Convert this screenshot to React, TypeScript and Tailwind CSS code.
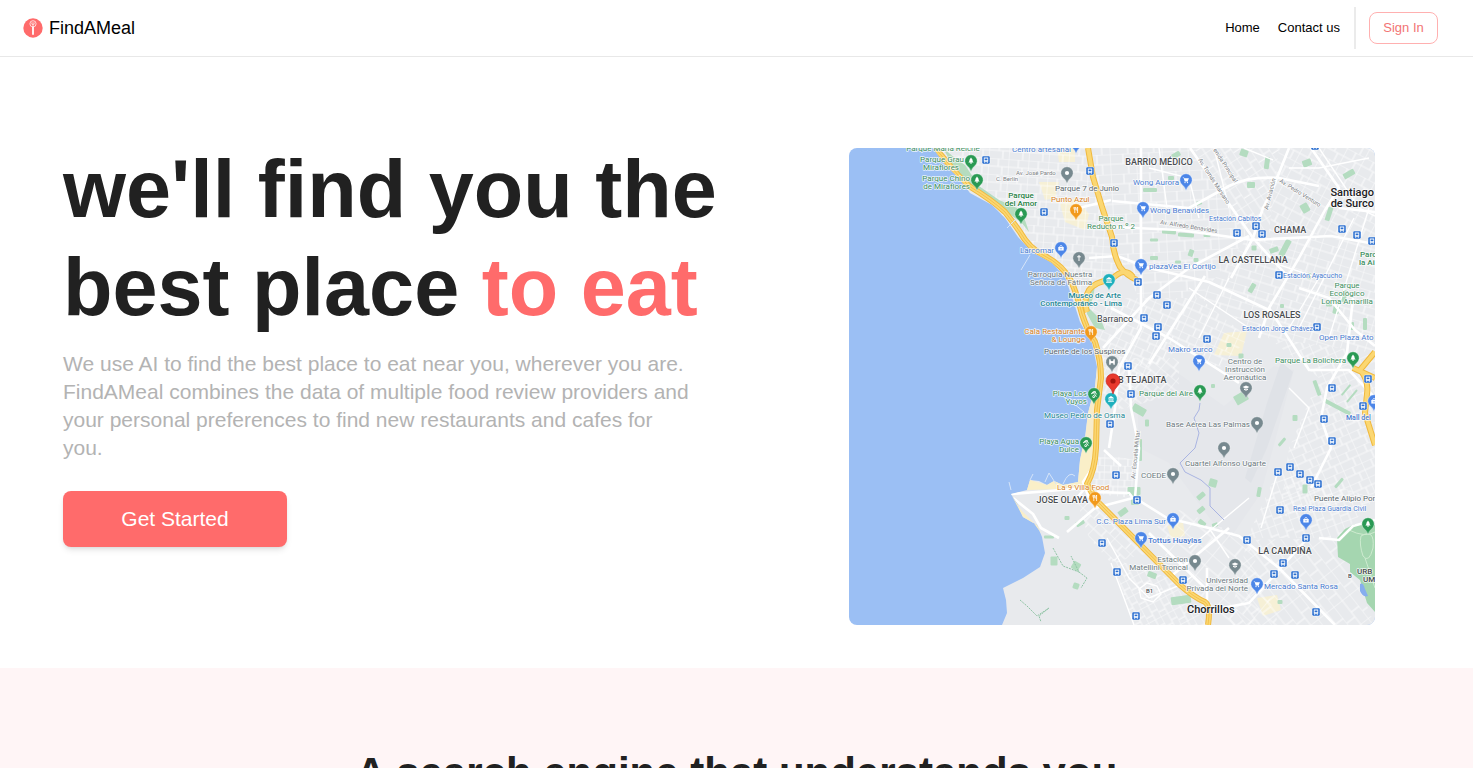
import type { ReactNode } from "react"

type Kind = "tree" | "food" | "cart" | "bag" | "dot" | "cross" | "museum" | "bridge" | "cap" | "beach"

const GREEN = "#2a9a54"
const BLUE = "#4c86e8"
const GREY = "#77898f"
const ORANGE = "#f29a1c"
const TEAL = "#1fb0bd"

const pins: [number, number, string, Kind][] = [
  [122, 13, GREEN, "tree"],
  [128, 32, GREEN, "tree"],
  [172, 66, GREEN, "tree"],
  [218, 25, GREY, "dot"],
  [227, 62, ORANGE, "food"],
  [227, -5, BLUE, "bag"],
  [212, 100, BLUE, "bag"],
  [230, 110, GREY, "cross"],
  [260, 132, TEAL, "museum"],
  [337, 32, BLUE, "cart"],
  [294, 60, BLUE, "cart"],
  [292, 117, BLUE, "cart"],
  [242, 184, ORANGE, "food"],
  [263, 214, GREY, "bridge"],
  [262, 251, TEAL, "museum"],
  [245, 246, GREEN, "beach"],
  [237, 295, GREEN, "beach"],
  [350, 213, BLUE, "cart"],
  [351, 243, GREEN, "tree"],
  [397, 240, GREY, "cap"],
  [504, 210, GREEN, "tree"],
  [408, 275, GREY, "dot"],
  [375, 300, GREY, "dot"],
  [525, 253, BLUE, "bag"],
  [324, 326, GREY, "dot"],
  [246, 350, ORANGE, "food"],
  [324, 371, BLUE, "bag"],
  [292, 390, BLUE, "cart"],
  [346, 413, GREY, "dot"],
  [386, 417, GREY, "cap"],
  [408, 436, BLUE, "cart"],
  [457, 372, BLUE, "bag"],
  [519, 376, GREEN, "tree"],
]

const stations: [number, number][] = [
  [137, 12], [195, 64], [241, 23], [265, 95], [388, 85], [407, 78], [413, 86],
  [493, 81], [508, 87], [523, 93], [430, 127], [289, 134], [308, 147], [466, -2],
  [318, 157], [295, 170], [309, 179], [307, 188], [279, 218], [282, 246], [261, 276],
  [358, 191], [468, 179], [519, 231], [483, 240], [514, 258], [475, 271], [483, 293],
  [267, 327], [288, 352], [253, 395], [268, 424], [287, 468], [429, 324], [441, 319],
  [451, 326], [461, 332], [469, 336], [431, 362], [457, 390], [398, 392], [434, 415],
  [425, 426], [446, 427], [334, 432], [467, 464],
]

type Label = {
  t: string
  x: number
  y: number
  c: string
  s?: number
  w?: number
  a?: "start" | "middle" | "end"
  r?: number
}

const park = "#3d8f5f"
const shop = "#4a7bd0"
const place = "#6d7a80"
const area = "#4a4d50"
const road = "#7b8084"
const food = "#d98324"
const museum = "#1c8794"

const labels: Label[] = [
  { t: "Parque Maria Reiche", x: 94, y: 3, c: park, a: "middle" },
  { t: "Parque Grau", x: 115, y: 14, c: park, a: "end" },
  { t: "Miraflores", x: 110, y: 22, c: park, a: "end" },
  { t: "Parque Chino", x: 121, y: 33, c: park, a: "end" },
  { t: "de Miraflores", x: 121, y: 41, c: park, a: "end" },
  { t: "Parque", x: 172, y: 50, c: "#1f8043", w: 500, a: "middle" },
  { t: "del Amor", x: 172, y: 58, c: "#1f8043", w: 500, a: "middle" },
  { t: "Centro artesanal", x: 163, y: 4, c: shop },
  { t: "Av. José Pardo", x: 167, y: 27, c: road, s: 6 },
  { t: "C. Berlín", x: 147, y: 33, c: road, s: 6 },
  { t: "Parque 7 de Junio", x: 206, y: 43, c: "#5a676d" },
  { t: "Punto Azul", x: 202, y: 54, c: food },
  { t: "Parque", x: 262, y: 73, c: park, a: "middle" },
  { t: "Reducto n.º 2", x: 262, y: 81, c: park, a: "middle" },
  { t: "Larcomar", x: 205, y: 105, c: shop, a: "end" },
  { t: "Parroquia Nuestra", x: 211, y: 129, c: place, a: "middle" },
  { t: "Señora de Fátima", x: 212, y: 137, c: place, a: "middle" },
  { t: "Museo de Arte", x: 272, y: 150, c: museum, w: 500, a: "end" },
  { t: "Contemporáneo - Lima", x: 273, y: 158, c: museum, w: 500, a: "end" },
  { t: "BARRIO MÉDICO", x: 310, y: 17, c: area, w: 500, a: "middle", s: 9 },
  { t: "Wong Aurora", x: 330, y: 37, c: shop, a: "end" },
  { t: "Wong Benavides", x: 301, y: 65, c: shop },
  { t: "Estación Cabitos", x: 360, y: 73, c: shop, s: 7 },
  { t: "CHAMA", x: 441, y: 85, c: area, w: 500, a: "middle", s: 9 },
  { t: "LA CASTELLANA", x: 404, y: 115, c: area, w: 500, a: "middle", s: 9 },
  { t: "plazaVea El Cortijo", x: 300, y: 121, c: shop },
  { t: "Estación Ayacucho", x: 434, y: 130, c: shop, s: 7 },
  { t: "Santiago", x: 525, y: 48, c: "#202124", s: 11, w: 500, a: "end" },
  { t: "de Surco", x: 525, y: 59, c: "#202124", s: 11, w: 500, a: "end" },
  { t: "Parc", x: 511, y: 109, c: park, w: 500 },
  { t: "la Ai", x: 510, y: 117, c: park, w: 500 },
  { t: "Parque", x: 498, y: 140, c: park, a: "middle" },
  { t: "Ecológico", x: 498, y: 148, c: park, a: "middle" },
  { t: "Loma Amarilla", x: 498, y: 156, c: park, a: "middle" },
  { t: "Av. Tomás Marsano", x: 349, y: 12, c: road, s: 6, r: 57 },
  { t: "enida Principal", x: 364, y: 2, c: road, s: 6, r: 57 },
  { t: "Av. Pedro Venturo", x: 430, y: 34, c: road, s: 6, r: 32 },
  { t: "Av. Aviación", x: 419, y: 62, c: road, s: 6, r: -76 },
  { t: "Av. Alfredo Benavides", x: 311, y: 76, c: road, s: 6, r: 9 },
  { t: "Barranco", x: 248, y: 174, c: "#3c4043", s: 9 },
  { t: "Cala Restaurante", x: 236, y: 186, c: food, a: "end" },
  { t: "& Lounge", x: 236, y: 194, c: food, a: "end" },
  { t: "Puente de los Suspiros", x: 195, y: 206, c: "#5a676d" },
  { t: "B TEJADITA", x: 269, y: 235, c: area, w: 500, s: 9 },
  { t: "Playa Los", x: 238, y: 248, c: park, a: "end" },
  { t: "Yuyos", x: 238, y: 256, c: park, a: "end" },
  { t: "Museo Pedro de Osma", x: 195, y: 270, c: museum },
  { t: "Playa Agua", x: 230, y: 296, c: park, a: "end" },
  { t: "Dulce", x: 230, y: 304, c: park, a: "end" },
  { t: "Makro surco", x: 319, y: 204, c: shop },
  { t: "LOS ROSALES", x: 423, y: 170, c: area, w: 500, a: "middle", s: 9 },
  { t: "Estación Jorge Chávez", x: 464, y: 183, c: shop, a: "end", s: 7 },
  { t: "Open Plaza Ato", x: 470, y: 192, c: shop },
  { t: "Centro de", x: 396, y: 216, c: place, a: "middle" },
  { t: "Instrucción", x: 396, y: 224, c: place, a: "middle" },
  { t: "Aeronáutica", x: 396, y: 232, c: place, a: "middle" },
  { t: "Parque La Bolichera", x: 497, y: 215, c: park, a: "end" },
  { t: "Parque del Aire", x: 344, y: 248, c: park, a: "end" },
  { t: "Base Aérea Las Palmas", x: 401, y: 279, c: place, a: "end" },
  { t: "Mall del", x: 497, y: 272, c: shop, w: 500, s: 7 },
  { t: "Cuartel Alfonso Ugarte", x: 336, y: 318, c: place },
  { t: "COEDE", x: 317, y: 330, c: place, a: "end" },
  { t: "Av. Escuela Militar", x: 286, y: 331, c: road, s: 6, r: -84 },
  { t: "La 9 Villa Food", x: 208, y: 342, c: food },
  { t: "JOSE OLAYA", x: 239, y: 355, c: area, w: 500, a: "end", s: 9 },
  { t: "C.C. Plaza Lima Sur", x: 317, y: 376, c: shop, a: "end" },
  { t: "Tottus Huaylas", x: 299, y: 395, c: shop, w: 500 },
  { t: "Estacion", x: 339, y: 414, c: place, a: "end" },
  { t: "Matellini Troncal", x: 339, y: 422, c: place, a: "end" },
  { t: "Puente Alipio Por", x: 465, y: 353, c: "#5a676d" },
  { t: "Real Plaza Guardia Civil", x: 444, y: 363, c: shop, s: 7 },
  { t: "LA CAMPIÑA", x: 436, y: 406, c: area, w: 500, a: "middle", s: 9 },
  { t: "URB", x: 508, y: 426, c: area, w: 500 },
  { t: "UM", x: 514, y: 434, c: area, w: 500 },
  { t: "B", x: 499, y: 430, c: area, s: 6, w: 500 },
  { t: "Universidad", x: 399, y: 435, c: place, a: "end" },
  { t: "Privada del Norte", x: 399, y: 443, c: place, a: "end" },
  { t: "Mercado Santa Rosa", x: 415, y: 441, c: shop },
  { t: "Chorrillos", x: 338, y: 465, c: "#202124", s: 11, w: 500 },
  { t: "B1", x: 297, y: 445, c: area, s: 6, w: 500 },
]

// Residential street grids: outline, rotation and block size
const blocks: [string, number, number, number][] = [
  ["M84 0H238L262 95L286 130L262 132L228 150L203 113L169 86L143 55L109 27Z", 4, 10, 8],
  ["M240 0H345L400 88L350 150H290L263 95Z", -3, 13, 10],
  ["M345 0H430L420 85L390 80Z", 57, 11, 8],
  ["M430 0H526V90L420 85Z", 28, 10, 9],
  ["M400 88L526 92V205L420 190L350 150Z", 17, 12, 8],
  ["M232 150H350L400 190L370 220L330 200L255 262L248 195Z", 24, 9, 8],
  ["M255 210H330L330 245L270 262Z", 40, 10, 8],
  ["M420 190L526 205V350L430 370L440 300L470 230Z", -24, 10, 8],
  ["M430 320L526 350L490 390L398 390Z", 70, 10, 8],
  ["M250 305L286 312L283 350L240 345Z", 2, 7, 7],
  ["M225 345L246 350L300 405L262 415L240 390Z", 44, 11, 8],
  ["M262 410L320 430L358 477H285Z", 62, 8, 7],
  ["M330 362L398 390L430 477H365L300 385Z", 40, 18, 13],
  ["M398 392L490 390L526 477H380Z", 52, 15, 10],
]

const COAST =
  "M84 0L96 17L109 29L121 45L143 57L156 70L169 89L183 104L203 115L216 129L224 152L231 174L243 195L248 219L246 239L239 265L236 289L231 312L229 334L214 337L205 333L198 337L190 333L181 332L178 342L162 346L168 355L174 369L188 377L193 389L196 405L191 419L174 430L154 440L157 452L158 465L153 477H526V0Z"

const highway =
  "M86 0L98 14Q109 28 120 38Q143 52 156 64Q164 74 171 84Q180 100 194 107Q214 117 222 133Q228 146 233 166Q238 182 246 194Q252 212 252 230L248 262L247 300Q246 322 238 336L247 352L331 437Q346 450 356 454Q362 458 359 477"
const mainYellow = "M239 0L244 29L253 59L263 89Q264 106 271 119Q278 128 288 132"
const branchYellow = "M284 129Q276 118 263 131Q246 134 240 142Q234 152 238 164"
const eastYellow = "M504 220L526 230M526 204L511 222Q520 232 518 246L516 265L526 297"

// Small squares and gardens scattered over the city
const greens: [number, number, number, number, number][] = [
  [327, 7, 9, 5, -30], [301, 42, 14, 4, 0], [322, 30, 6, 4, 0], [350, 55, 6, 4, -20],
  [395, 5, 8, 7, 20], [402, 37, 8, 6, 0], [418, 15, 5, 12, 8], [458, 15, 9, 7, -20],
  [500, 26, 12, 6, -30], [456, 60, 8, 9, -30], [480, 66, 5, 14, 18], [320, 84, 14, 4, 4],
  [337, 87, 16, 4, 4], [305, 92, 8, 3, 0], [358, 87, 7, 4, 0], [436, 100, 6, 18, 28],
  [425, 102, 9, 5, -20], [405, 100, 5, 5, 0], [403, 140, 5, 10, 30], [342, 105, 5, 7, 20],
  [305, 110, 8, 4, 0], [329, 114, 6, 3, 0], [347, 112, 5, 4, 0], [290, 262, 14, 8, 30],
  [290, 302, 6, 22, 0], [298, 275, 4, 7, 0], [285, 343, 13, 8, 0], [286, 352, 8, 10, 0],
  [274, 364, 10, 6, -36], [231, 375, 9, 5, -30], [218, 370, 5, 4, 0], [303, 427, 9, 6, 20],
  [352, 348, 9, 5, -40], [364, 335, 8, 8, 15], [352, 362, 8, 5, -40], [353, 375, 8, 5, 40],
  [366, 377, 6, 4, -20], [410, 344, 4, 10, 10], [392, 250, 13, 10, -30], [392, 208, 5, 5, 0],
  [380, 197, 5, 4, 0], [364, 238, 4, 4, 0], [433, 158, 4, 4, 0], [460, 128, 4, 6, 10],
  [516, 176, 4, 12, 0], [503, 178, 4, 8, 0], [480, 156, 6, 5, 0], [497, 242, 14, 2, -50],
  [503, 248, 16, 2, -50], [468, 240, 4, 16, -20], [488, 259, 30, 4, 28], [446, 270, 5, 6, 0],
  [433, 294, 10, 3, -50], [456, 341, 5, 9, 0], [490, 335, 12, 3, -50], [495, 148, 5, 12, 12],
  [487, 162, 6, 8, 12], [205, 413, 7, 9, 0], [200, 389, 10, 3, 0], [227, 418, 8, 8, 30],
  [227, 438, 6, 6, 20], [332, 452, 20, 8, -8], [431, 454, 5, 4, 0],
]

function Glyph({ kind }: { kind: Kind }) {
  const shapes: Record<Kind, ReactNode> = {
    tree: <path d="M0-3.4L2-.6H1.2L2.6 1.6H.5V3H-.5V1.6H-2.6L-1.2-.6H-2Z" fill="#fff" />,
    food: (
      <path
        d="M-2-3V-1.2Q-2-.3-1.2-.3V3M-1.2-3V-.6M-.4-3V-1.2Q-.4-.3-1.2-.3M1.6 3V-3Q.6-2.4.7.3H1.6"
        fill="none"
        stroke="#fff"
        strokeWidth=".8"
      />
    ),
    cart: (
      <g fill="#fff">
        <path d="M-3.2-2.6H-2L-1.7-1.8H2.9L1.8.9H-1.4L-2.4-2H-3.2Z" />
        <path d="M-1.5 1.2H2V1.8H-1.5Z" />
        <circle cx="-1" cy="2.6" r=".7" />
        <circle cx="1.5" cy="2.6" r=".7" />
      </g>
    ),
    bag: (
      <g>
        <path d="M-2.7-1H2.7V2.6H-2.7Z" fill="#fff" />
        <path d="M-1.2-1V-1.8Q0-3.6 1.2-1.8V-1" fill="none" stroke="#fff" strokeWidth=".7" />
        <path d="M-1.2.3Q0 2 1.2.3" fill="none" stroke={BLUE} strokeWidth=".6" />
      </g>
    ),
    dot: <circle r="2.1" fill="#fff" />,
    cross: <path d="M0-3V3M-1.8-1.2H1.8" stroke="#fff" strokeWidth="1" />,
    museum: (
      <path
        d="M-2.9-1L0-3L2.9-1V-.4H-2.9ZM-2.3 0H-1.4V2H-2.3ZM-.5 0H.5V2H-.5ZM1.4 0H2.3V2H1.4ZM-2.9 2.2H2.9V2.9H-2.9Z"
        fill="#fff"
      />
    ),
    bridge: (
      <path
        d="M-2.8-2.8H-1.4V-1.4Q0-.2 1.4-1.4V-2.8H2.8V2.8H1.4V1.6Q0 .2-1.4 1.6V2.8H-2.8Z"
        fill="#fff"
      />
    ),
    cap: <path d="M0-2.6L3.4-.9L0 .8L-3.4-.9ZM-2 .6L0 1.6L2 .6V1.8L0 2.8L-2 1.8Z" fill="#fff" />,
    beach: (
      <path
        d="M-2.6-.2Q-1.6-3 1.4-2.4L-2.6-.2M-.6-1.4L2.4 2.6M.4 1.8A1 1 0 1 0 .5 1.9M1-2.2L2.6.4"
        fill="none"
        stroke="#fff"
        strokeWidth=".9"
      />
    ),
  }
  return <>{shapes[kind]}</>
}

function CityMap() {
  return (
    <svg
      viewBox="0 0 526 477"
      role="img"
      aria-label="Map of Barranco, Lima"
      className="block w-full h-auto rounded-lg bg-[#9bbff4]"
      fontFamily="Roboto, 'Liberation Sans', sans-serif"
    >
      <defs>
        <clipPath id="land">
          <path d={COAST} />
        </clipPath>
        {blocks.map(([, angle, w, h], i) => (
          <pattern
            key={i}
            id={`streets-${i}`}
            width={w * 2}
            height={h * 2}
            patternUnits="userSpaceOnUse"
            patternTransform={`rotate(${angle})`}
          >
            <path
              d={`M0 0H${w * 2}M0 ${h}H${w * 2}M0 0V${h * 2}M${w} 0V${h}M${w * 1.4} ${h}V${h * 2}`}
              stroke="#fff"
              strokeWidth="1.2"
              fill="none"
            />
          </pattern>
        ))}
      </defs>

      <path d={COAST} fill="#e8eaed" />
      <path d="M229 334L214 337L205 333L198 337L181 332L178 342L215 341L236 338L247 300L240 290L236 289L231 312ZM162 346L174 369L188 377L192 385L184 374L172 362Z" fill="#faefc8" />
      <path d="M248 219L246 239L239 265L236 292L244 300L249 262L252 230Z" fill="#f7ecca" />

      <g clipPath="url(#land)">
        {/* Air base and barracks */}
        <path d="M322 220L375 258L425 218L445 222L412 345L380 392L362 372L320 315L290 300L288 245Z" fill="#e5e7eb" />
        <path d="M432 214L444 224L418 300L402 335L396 330L418 255Z" fill="#dfe2e7" />
        <path d="M375 185L398 183L392 208L365 207ZM190 34L210 34L206 50L196 52ZM211 56L226 50L240 66L236 82L216 74ZM318 378L334 374L336 388L322 390ZM408 450L428 447L432 462L414 468ZM208 0H226V14H210Z" fill="#f6f0d6" />

        {blocks.map(([d], i) => (
          <path key={i} d={d} fill={`url(#streets-${i})`} opacity=".7" />
        ))}

        {greens.map(([x, y, w, h, r], i) => (
          <rect
            key={i}
            x={x - w / 2}
            y={y - h / 2}
            width={w}
            height={h}
            rx="1"
            fill="#b4dcc0"
            transform={`rotate(${r} ${x} ${y})`}
          />
        ))}
        <path d="M94 0L106 10L116 17L130 38L150 52L168 60L176 72L180 84L172 74L160 66L140 54L124 42L106 22Z" fill="#b5dcbf" />
        <path d="M238 140L246 138L244 150L240 160L252 172L256 182L246 180L238 166Z" fill="#b5dcbf" />
        <path d="M488 390L496 381L506 376L526 377V464L518 455L511 432L501 424V416L489 409Z" fill="#a5d6b0" />
        <path d="M512 388Q526 380 524 400Q520 416 514 408Q510 396 512 388M500 382Q516 390 526 384M516 410L526 440" fill="none" stroke="#cdeacf" strokeWidth="1" />
        <path d="M511 436Q514 434 516 441L519 448Q514 450 511 443Z" fill="#86aeee" />

        {/* Avenues */}
        <g fill="none" stroke="#fff" strokeLinejoin="round" strokeWidth="2.6">
          <path d="M341 0L404 90L440 130M263 79L330 82L404 92L482 88L526 96" />
          <path d="M263 53L340 60L380 38Q400 28 430 30L470 38M440 0L424 40L414 60L404 90L382 130" />
          <path d="M462 0L490 40L476 62L450 110L420 160L410 190M490 60L526 64M292 0V180L270 220L266 260L260 300" />
          <path d="M240 110L268 108L300 120L360 134L420 162M230 60L262 52" />
          <path d="M254 200L300 150L340 120L400 88M262 160L320 190L370 222L390 235M356 128L300 216" />
          <path d="M280 218L282 260L290 300L286 350L318 370L360 380L390 388L430 420L486 477" />
          <path d="M504 150L498 205L478 240L472 270L482 300L462 340M526 198L506 182L480 150L450 140" />
          <path d="M420 160L460 222L500 222L526 250M470 390L490 392L504 378L526 372M457 392L400 455L362 462" />
          <path d="M162 346L200 343L236 340L228 350M164 350L184 366L192 380L210 390M218 384L246 360L284 350L280 345L248 344M255 302L272 318" />
          <path d="M300 385L356 440M320 430L380 380M358 454V420M240 350L234 334L242 322" />
        </g>
        <g fill="none" stroke="#fff" strokeWidth="1.4">
          <path d="M300 20L340 30L350 70M310 0L318 60M365 0L380 60M395 0L424 12M440 20L470 20L520 10" />
          <path d="M410 110L470 130L440 180M520 60L480 190M505 70L450 180M380 130L350 190M340 140L400 180" />
          <path d="M445 300L460 260L440 240M430 320L412 380M340 400L400 350M380 410L360 380M331 437L300 450L280 430L258 390" />
          <path d="M298 435L308 438L312 446L304 454L292 450L290 441ZM262 415L285 477M470 0L510 60L526 68M331 437L345 427" />
        </g>
        <path d="M351 255L350 262L345 270L350 285L346 300L331 315L336 324L352 332L361 340V358L375 372" fill="none" stroke="#a9b4e2" strokeWidth="1" />
        <path d="M204 400L214 418L230 424L222 408M230 424L238 430L232 440M171 452L178 458L188 468L200 460L190 468L192 474" fill="none" stroke="#8fc3a4" strokeDasharray="2 1" strokeWidth="1" />

        {/* Highways */}
        <g fill="none" strokeLinejoin="round">
          <g stroke="#f0b93f" strokeWidth="6">
            <path d={highway} />
            <path d={mainYellow} />
            <path d={branchYellow} />
            <path d={eastYellow} />
          </g>
          <g stroke="#fbd772" strokeWidth="4">
            <path d={highway} />
            <path d={mainYellow} />
            <path d={branchYellow} />
            <path d={eastYellow} />
          </g>
          <path d={highway} stroke="#f3c14d" strokeWidth="1" />
        </g>
      </g>
      <path d="M158 80L166 72M172 122L181 107M235 264L224 255M196 334L200 325L207 336M214 336Q220 322 226 328M162 342L160 334M181 332L184 326" fill="none" stroke="#d5e4f8" strokeWidth="1" />

      {stations.map(([x, y], i) => (
        <g key={i} transform={`translate(${x} ${y})`}>
          <rect x="-4" y="-4" width="8" height="8" rx="1.4" fill="#2b6fd0" stroke="#fff" strokeWidth=".5" />
          <path d="M-2.2-2.4H2.2V1.8H-2.2Z" fill="#fff" />
          <path d="M-1.4-1.4H1.4V.2H-1.4Z" fill="#2b6fd0" />
          <path d="M-1.8 1.8H-.8V2.8H-1.8ZM.8 1.8H1.8V2.8H.8Z" fill="#fff" />
        </g>
      ))}

      {labels.map(({ t, x, y, c, s = 8, w = 400, a = "start", r = 0 }) => (
        <text
          key={`${t}-${x}-${y}`}
          x={x}
          y={y}
          fontSize={s}
          fontWeight={w}
          fill={c}
          textAnchor={a}
          stroke="#fff"
          strokeOpacity=".8"
          strokeWidth="1.6"
          strokeLinejoin="round"
          paintOrder="stroke"
          transform={r ? `rotate(${r} ${x} ${y})` : undefined}
        >
          {t}
        </text>
      ))}

      {pins.map(([x, y, color, kind], i) => (
        <g key={i} transform={`translate(${x} ${y})`}>
          <path
            d="M0 10.4Q-.8 7-3.7 4.9A6.2 6.2 0 1 1 3.7 4.9Q.8 7 0 10.4Z"
            fill={color}
            stroke="#fff"
            strokeWidth=".4"
          />
          <Glyph kind={kind} />
        </g>
      ))}

      <g transform="translate(264 233)">
        <path d="M0 13Q-.8 8.6-4.4 5.2A7 7 0 1 1 4.4 5.2Q.8 8.6 0 13Z" fill="#e8392d" stroke="#c5221f" strokeWidth=".6" />
        <circle r="2.6" fill="#a3160f" />
      </g>
    </svg>
  )
}

function Logo() {
  return (
    <svg viewBox="0 0 20 20" className="size-5" aria-hidden="true">
      <circle cx="10" cy="10" r="9.7" fill="#ff6b6b" />
      <circle cx="10" cy="5.8" r="3.1" fill="none" stroke="#fff" strokeWidth=".8" opacity=".9" />
      <path d="M8.8 4.4V6.2Q10 7.6 11.2 6.2V4.4M10 4.2V8" fill="none" stroke="#fff" strokeWidth=".6" />
      <path d="M9.1 8.6H10.9V16.8H9.1Z" fill="#fff" />
    </svg>
  )
}

export default function App() {
  return (
    <div className="min-h-screen bg-white font-['Liberation_Sans',Arial,sans-serif] text-[#212121]">
      {/* Header */}
      <header className="flex items-center justify-between h-[57px] pl-[23px] pr-[35px] border-b border-[#e8e8e8]">
        <a href="#" className="flex items-center gap-[6px] text-lg leading-6 text-black">
          <Logo />
          FindAMeal
        </a>
        <div className="flex items-center">
          <nav className="flex gap-[18px] pr-[14px] text-[13px] leading-5 text-black">
            <a href="#home">Home</a>
            <a href="#contact">Contact us</a>
          </nav>
          <div className="w-0.5 h-[42px] mr-[13px] bg-[#ebebeb]" />
          <button
            type="button"
            className="h-8 w-[69px] rounded-lg border border-[#ffb0b0] text-[13px] leading-5 text-[#f27474]"
          >
            Sign In
          </button>
        </div>
      </header>

      {/* Hero */}
      <section className="flex items-start justify-between gap-12 pt-[83px] pb-[43px] pl-[63px] pr-[98px]">
        <div className="flex-1">
          <h1 className="text-[81px] leading-[98px] font-bold">
            we'll find you the
            <br />
            best place <span className="text-[#ff6b6b]">to eat</span>
          </h1>
          <p className="mt-[14px] max-w-[632px] text-[21px] leading-7 text-[#b3b3b3]">
            We use AI to find the best place to eat near you, wherever you are.
            FindAMeal combines the data of multiple food review providers and
            your personal preferences to find new restaurants and cafes for you.
          </p>
          <button
            type="button"
            className="mt-[29px] h-14 w-56 rounded-lg bg-[#ff6b6b] text-[21px] leading-7 text-white shadow-md"
          >
            Get Started
          </button>
        </div>
        <div className="w-full max-w-[526px] mt-2">
          <CityMap />
        </div>
      </section>

      {/* Features */}
      <section className="bg-[#fff5f6] pt-20 pb-20">
        <h2 className="text-center text-[42px] leading-[50px] font-bold">
          A search engine that understands you
        </h2>
      </section>
    </div>
  )
}
